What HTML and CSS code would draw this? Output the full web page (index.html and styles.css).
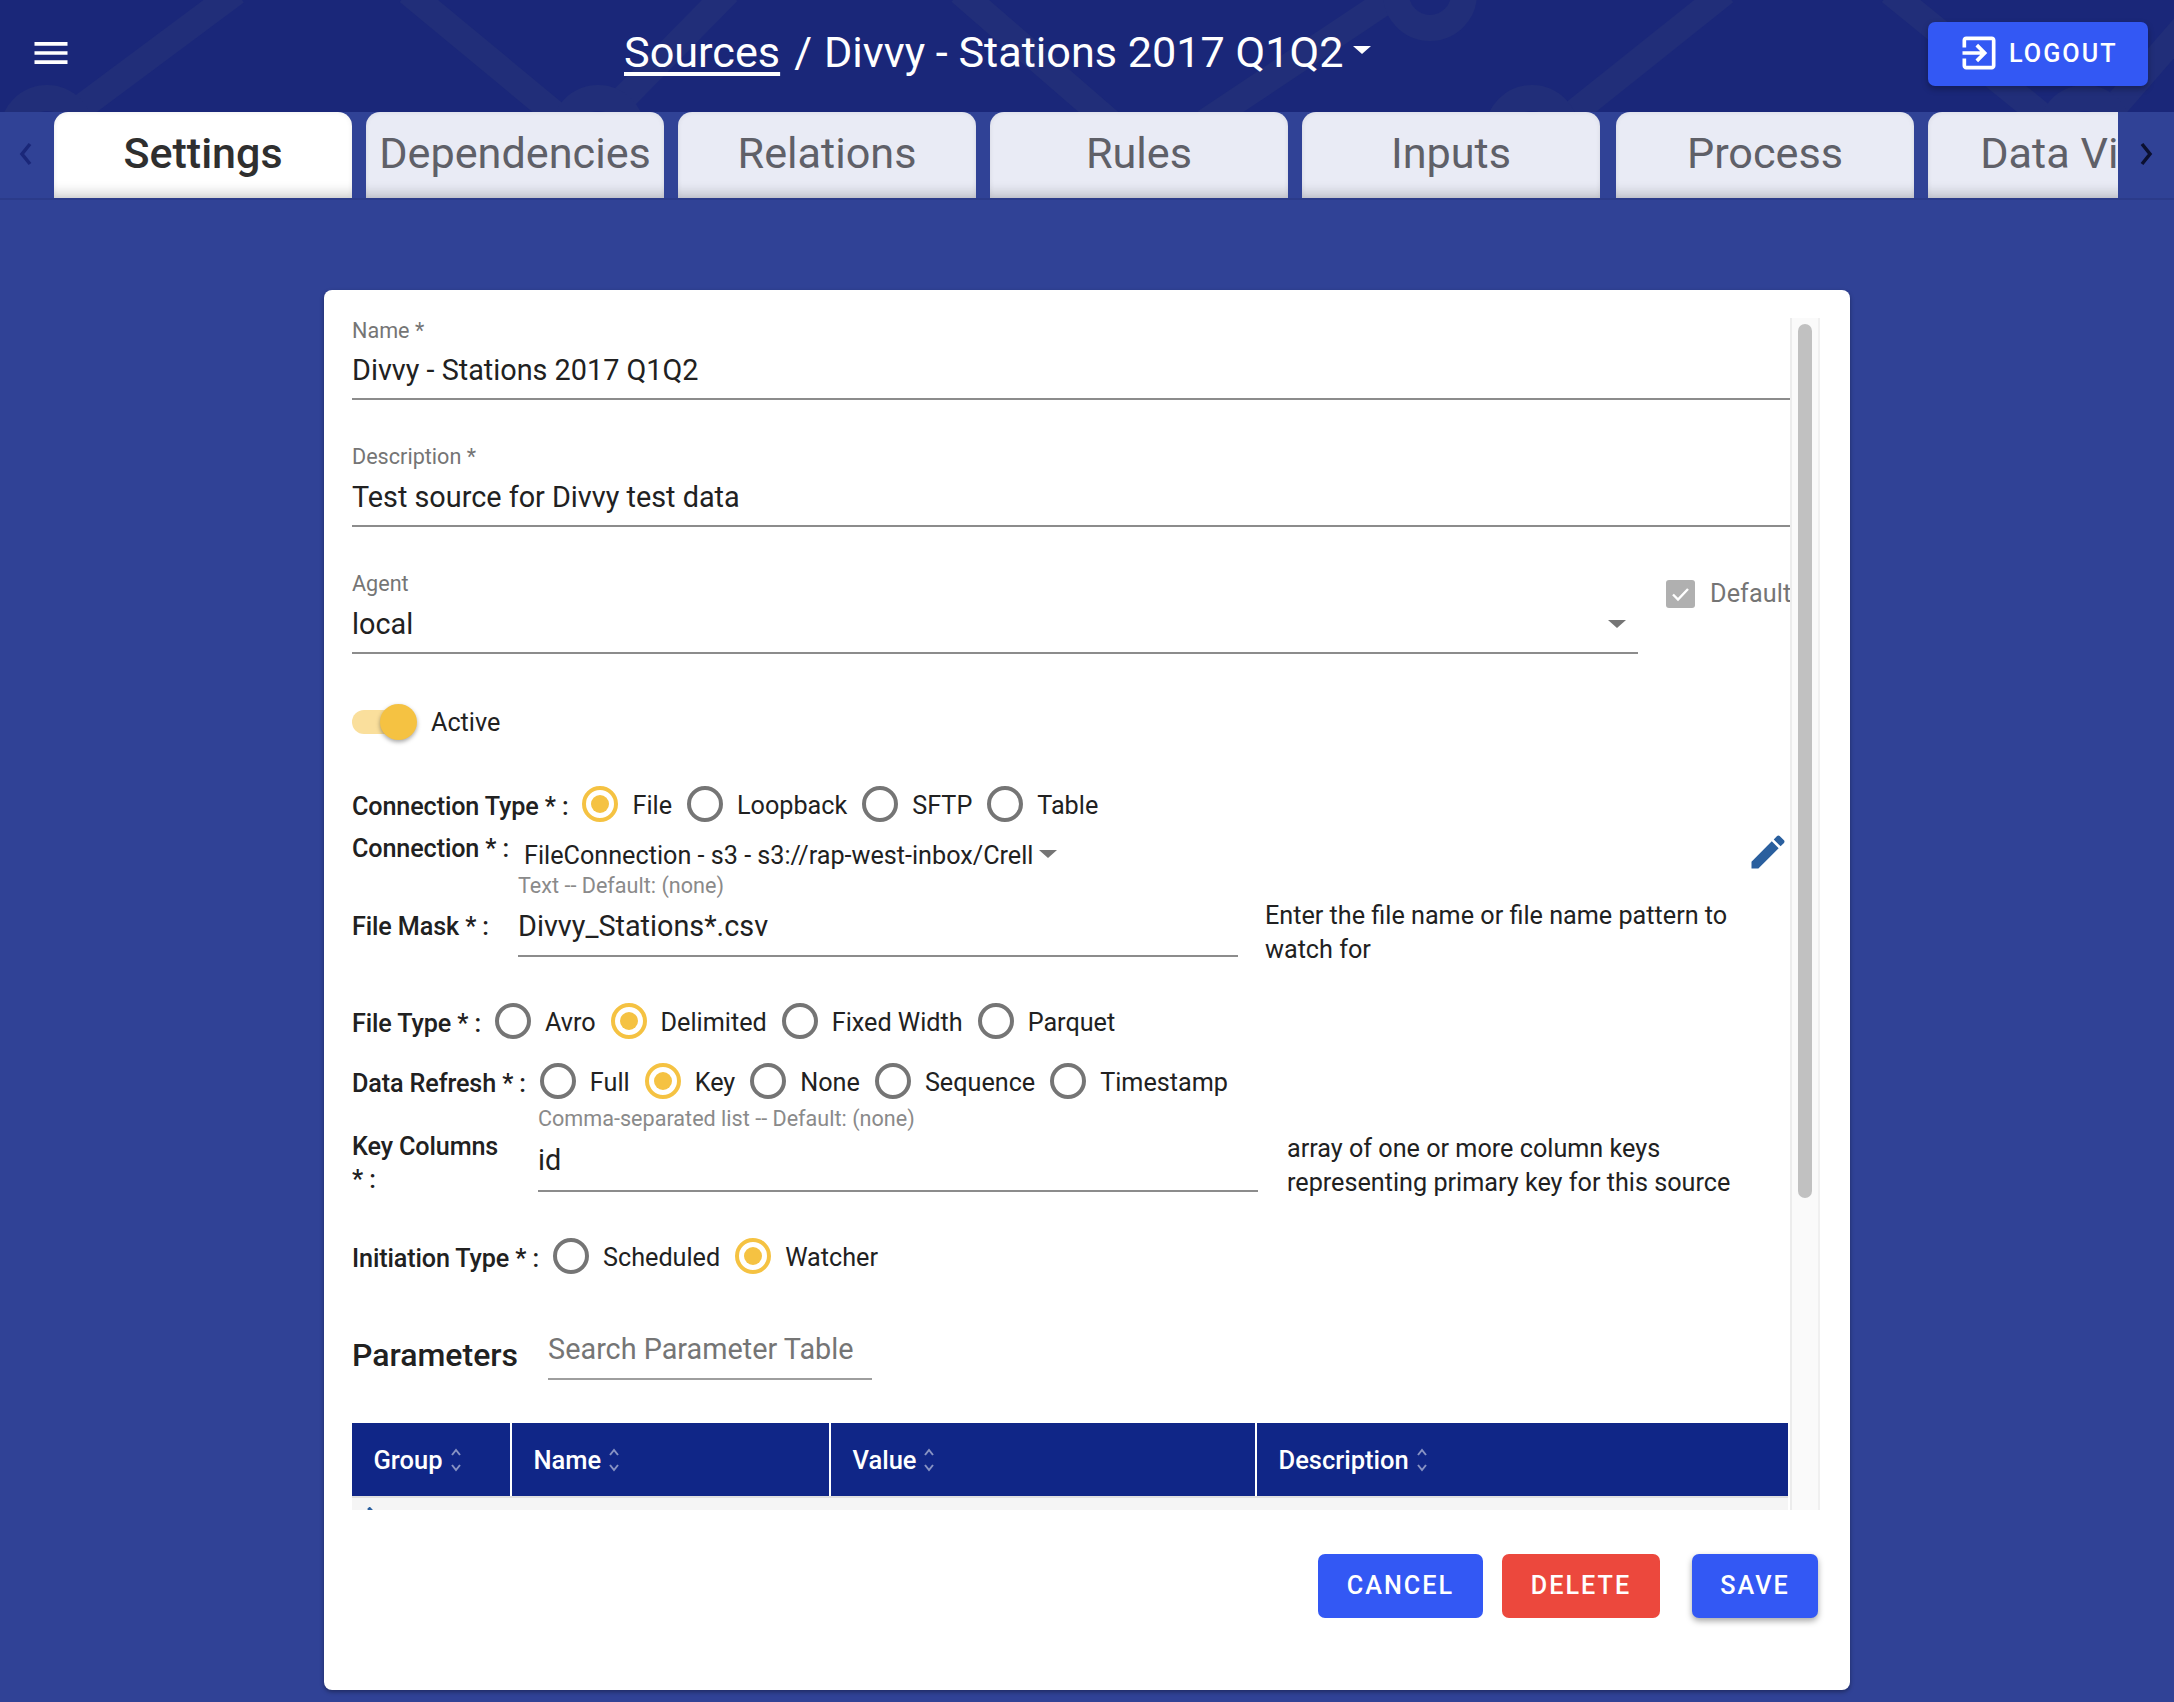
FILE: index.html
```html
<!DOCTYPE html>
<html>
<head lang="en">
    <meta charset="UTF-8">
    <title>Sources</title>
    <link rel="stylesheet" href="styles.css">
</head>
<body>
<div class="topbar">
    <svg class="topbar-bg" width="2174" height="112" viewBox="0 0 2174 112" fill="none">
        <g stroke="#212e79" stroke-width="26">
            <path d="M75 112L236 -8"/>
            <path d="M408 -8L565 122"/>
            <path d="M610 112L728 -8"/>
            <path d="M960 -8L1110 122"/>
            <path d="M1205 122L1400 -8"/>
            <path d="M1575 112L1725 -8"/>
            <path d="M1890 -8L2050 122"/>
            <path d="M2110 112L2190 20"/>
            <circle cx="47" cy="132" r="34"/>
            <circle cx="598" cy="132" r="34"/>
            <circle cx="1430" cy="-6" r="34"/>
            <circle cx="1532" cy="132" r="34"/>
            <circle cx="2085" cy="132" r="34"/>
        </g>
    </svg>
    <svg class="menu-icon" width="44" height="44" viewBox="0 0 24 24" fill="#fff"><path d="M3 18h18v-2H3v2zm0-5h18v-2H3v2zm0-7v2h18V6H3z"/></svg>
    <div class="title">
        <a class="title-link">Sources</a>
        <span class="title-sep">/</span>
        <span>Divvy - Stations 2017 Q1Q2</span>
        <span class="caret caret-white"></span>
    </div>
    <button class="btn btn-logout">
        <svg width="44" height="44" viewBox="0 0 24 24" fill="#fff"><path d="M10.09 15.59L11.5 17l5-5-5-5-1.41 1.41L12.67 11H3v2h9.67l-2.58 2.59zM19 3H5c-1.11 0-2 .9-2 2v4h2V5h14v14H5v-4H3v4c0 1.1.89 2 2 2h14c1.1 0 2-.9 2-2V5c0-1.1-.9-2-2-2z"/></svg>
        <span>LOGOUT</span>
    </button>
</div>

<div class="tabbar">
    <div class="tab-arrow tab-arrow-left">
        <svg width="20" height="30" viewBox="0 0 20 30" fill="none" stroke="#1a2779" stroke-width="3.5"><path d="M14 5L6 15l8 10"/></svg>
    </div>
    <div class="tabs">
        <div class="tab tab-active">Settings</div>
        <div class="tab">Dependencies</div>
        <div class="tab">Relations</div>
        <div class="tab">Rules</div>
        <div class="tab">Inputs</div>
        <div class="tab tab-process">Process</div>
        <div class="tab">Data View</div>
    </div>
    <div class="tab-arrow tab-arrow-right">
        <svg width="20" height="30" viewBox="0 0 20 30" fill="none" stroke="#0b1030" stroke-width="3.5"><path d="M6 5l8 10L6 25"/></svg>
    </div>
</div>

<div class="card">
    <div class="pane">
        <div class="form">
            <div class="field field-name">
                <div class="field-label">Name *</div>
                <div class="field-value">Divvy - Stations 2017 Q1Q2</div>
            </div>
            <div class="field field-desc">
                <div class="field-label">Description *</div>
                <div class="field-value">Test source for Divvy test data</div>
            </div>
            <div class="agent-row">
                <div class="field field-agent">
                    <div class="field-label">Agent</div>
                    <div class="field-value">local<span class="caret caret-select"></span></div>
                </div>
                <div class="default-check">
                    <span class="checkbox">
                        <svg width="29" height="28" viewBox="0 0 29 28" fill="none" stroke="#fff" stroke-width="2.4"><path d="M7 14.5l5 5L22 9"/></svg>
                    </span>
                    <span>Default</span>
                </div>
            </div>

            <div class="switch-row">
                <span class="switch"><span class="switch-thumb"></span></span>
                <span>Active</span>
            </div>

            <div class="radio-row row-conntype">
                <span class="row-label">Connection Type * :</span>
                <span class="option"><span class="radio radio-on"></span>File</span>
                <span class="option"><span class="radio"></span>Loopback</span>
                <span class="option"><span class="radio"></span>SFTP</span>
                <span class="option"><span class="radio"></span>Table</span>
            </div>

            <div class="conn-row">
                <span class="row-label conn-label">Connection * :</span>
                <div class="conn-body">
                    <div class="conn-value">FileConnection - s3 - s3://rap-west-inbox/Crell<span class="caret caret-conn"></span></div>
                    <div class="hint">Text -- Default: (none)</div>
                </div>
                <svg class="edit-icon" width="44" height="44" viewBox="0 0 24 24" fill="#2a5f9e"><path d="M3 17.25V21h3.75L17.81 9.94l-3.75-3.75L3 17.25zM20.71 7.04c.39-.39.39-1.02 0-1.41l-2.34-2.34c-.39-.39-1.02-.39-1.41 0l-1.83 1.83 3.75 3.75 1.83-1.83z"/></svg>
            </div>

            <div class="mask-row">
                <span class="row-label mask-label">File Mask * :</span>
                <div class="input-line">Divvy_Stations*.csv</div>
                <div class="help help-mask">Enter the file name or file name pattern to watch for</div>
            </div>

            <div class="radio-row row-filetype">
                <span class="row-label">File Type * :</span>
                <span class="option"><span class="radio"></span>Avro</span>
                <span class="option"><span class="radio radio-on"></span>Delimited</span>
                <span class="option"><span class="radio"></span>Fixed Width</span>
                <span class="option"><span class="radio"></span>Parquet</span>
            </div>

            <div class="radio-row row-refresh">
                <span class="row-label">Data Refresh * :</span>
                <span class="option"><span class="radio"></span>Full</span>
                <span class="option"><span class="radio radio-on"></span>Key</span>
                <span class="option"><span class="radio"></span>None</span>
                <span class="option"><span class="radio"></span>Sequence</span>
                <span class="option"><span class="radio"></span>Timestamp</span>
            </div>

            <div class="key-row">
                <span class="row-label key-label">Key Columns * :</span>
                <div class="key-body">
                    <div class="hint">Comma-separated list -- Default: (none)</div>
                    <div class="input-line">id</div>
                </div>
                <div class="help help-key">array of one or more column keys representing primary key for this source</div>
            </div>

            <div class="radio-row row-init">
                <span class="row-label">Initiation Type * :</span>
                <span class="option"><span class="radio"></span>Scheduled</span>
                <span class="option"><span class="radio radio-on"></span>Watcher</span>
            </div>

            <div class="param-row">
                <span class="param-title">Parameters</span>
                <div class="param-search">Search Parameter Table</div>
            </div>

            <table class="param-table">
                <thead>
                    <tr>
                        <th class="col-group">Group<svg class="sort" width="12" height="24" viewBox="0 0 12 24" fill="none"><path d="M2 7l4-5 4 5M2 17l4 5 4-5"/></svg></th>
                        <th class="col-name">Name<svg class="sort" width="12" height="24" viewBox="0 0 12 24" fill="none"><path d="M2 7l4-5 4 5M2 17l4 5 4-5"/></svg></th>
                        <th class="col-value">Value<svg class="sort" width="12" height="24" viewBox="0 0 12 24" fill="none"><path d="M2 7l4-5 4 5M2 17l4 5 4-5"/></svg></th>
                        <th>Description<svg class="sort" width="12" height="24" viewBox="0 0 12 24" fill="none"><path d="M2 7l4-5 4 5M2 17l4 5 4-5"/></svg></th>
                    </tr>
                </thead>
                <tbody>
                    <tr>
                        <td colspan="4"><svg width="24" height="24" viewBox="0 0 24 24" fill="#2a5f9e"><path d="M3 17.25V21h3.75L17.81 9.94l-3.75-3.75L3 17.25zM20.71 7.04c.39-.39.39-1.02 0-1.41l-2.34-2.34c-.39-.39-1.02-.39-1.41 0l-1.83 1.83 3.75 3.75 1.83-1.83z"/></svg></td>
                    </tr>
                </tbody>
            </table>
        </div>
        <div class="scrollbar"><div class="scroll-thumb"></div></div>
    </div>

    <div class="actions">
        <button class="btn btn-cancel">CANCEL</button>
        <button class="btn btn-delete">DELETE</button>
        <button class="btn btn-save">SAVE</button>
    </div>
</div>
</body>
</html>
```

FILE: styles.css
```css
* {
    margin: 0;
    padding: 0;
    box-sizing: border-box;
}
html, body {
    height: 100%;
    overflow: hidden;
}
body {
    background: #304296;
    font-family: Roboto, "Liberation Sans", sans-serif;
    font-size: 25.2px;
    color: #212121;
}

/* top bar */
.topbar {
    position: relative;
    height: 112px;
    background: #1a2779;
    display: flex;
    align-items: center;
    color: #fff;
    overflow: hidden;
}
.topbar-bg {
    position: absolute;
    left: 0;
    top: 0;
}
.menu-icon {
    position: relative;
    margin: 0 0 6px 29px;
}
.title {
    position: relative;
    margin: 0 0 6px 551px;
    display: flex;
    align-items: center;
    font-size: 43.2px;
    line-height: 52px;
}
.title-link {
    text-decoration: underline;
    text-decoration-thickness: 4px;
    text-underline-offset: 5px;
}
.title-sep {
    margin: 0 12px 0 14px;
}
.caret {
    display: inline-block;
    width: 0;
    height: 0;
    border-left: 9px solid transparent;
    border-right: 9px solid transparent;
    border-top: 8px solid #757575;
}
.caret-white {
    border-top-color: #fff;
    margin: 0 0 7px 9px;
}
.btn {
    border: 0;
    border-radius: 7px;
    height: 64px;
    padding-bottom: 2px;
    color: #fff;
    font-family: Roboto, "Liberation Sans", sans-serif;
    font-size: 25.2px;
    font-weight: 500;
    letter-spacing: 2px;
    background: #3358f4;
}
.btn-logout {
    position: absolute;
    left: 1928px;
    top: 22px;
    width: 220px;
    display: flex;
    align-items: center;
    padding-left: 29px;
    gap: 8px;
    box-shadow: 0 3px 6px rgba(0, 0, 0, 0.3);
}

/* tabs */
.tabbar {
    height: 88px;
    display: flex;
    border-bottom: 2px solid #2b3b8a;
    background: #304296;
}
.tab-arrow {
    display: flex;
    align-items: center;
    justify-content: center;
    flex: none;
    padding-bottom: 2px;
}
.tab-arrow-left {
    width: 54px;
    padding-right: 2px;
}
.tab-arrow-right {
    width: 56px;
}
.tabs {
    width: 2064px;
    display: flex;
    gap: 14px;
    overflow: hidden;
}
.tab {
    flex: none;
    width: 298px;
    height: 86px;
    background: #e9ebf5;
    color: #5f6068;
    border-radius: 14px 14px 0 0;
    font-size: 43.2px;
    line-height: 84px;
    text-align: center;
    white-space: nowrap;
    box-shadow: inset 0 -16px 12px -10px rgba(0, 0, 0, 0.16), inset 0 0 5px rgba(0, 0, 0, 0.08);
}
.tab-active {
    background: #fff;
    color: #2f2f2f;
    font-weight: 500;
    font-size: 43px;
    line-height: 83px;
}
.tab-process {
    margin-left: 2px;
}

/* card */
.card {
    margin: 90px 0 0 324px;
    width: 1526px;
    height: 1400px;
    background: #fff;
    border-radius: 8px;
    box-shadow: 0 2px 4px rgba(0, 0, 0, 0.35);
    padding: 28px 0 0 28px;
}
.pane {
    display: flex;
    height: 1192px;
    overflow: hidden;
}
.form {
    width: 1438px;
    flex: none;
    overflow: hidden;
}
.scrollbar {
    width: 30px;
    flex: none;
    background: #fafafa;
    border-left: 2px solid #ececec;
    border-right: 2px solid #f0f0f0;
    padding: 6px 6px 0;
}
.scroll-thumb {
    height: 874px;
    background: #c1c1c1;
    border-radius: 8px;
}

/* text fields */
.field-label {
    height: 25px;
    font-size: 21.6px;
    line-height: 25px;
    color: #757575;
}
.field-desc .field-label,
.field-agent .field-label {
    line-height: 23px;
}
.field-value {
    height: 57px;
    border-bottom: 2px solid #8c8c8c;
    font-size: 28.8px;
    line-height: 54px;
    position: relative;
}
.field-desc {
    margin-top: 45px;
}
.agent-row {
    margin-top: 45px;
    display: flex;
    height: 82px;
}
.field-agent {
    width: 1286px;
    flex: none;
}
.caret-select {
    position: absolute;
    right: 12px;
    top: 23px;
}
.default-check {
    margin-left: 28px;
    padding-top: 8px;
    display: flex;
    gap: 15px;
    color: #757575;
    white-space: nowrap;
    line-height: 28px;
    letter-spacing: 0.1px;
    overflow: hidden;
    height: 40px;
    flex: none;
    width: 124px;
}
.checkbox {
    flex: none;
    width: 29px;
    height: 28px;
    background: #b0b0b0;
    border-radius: 3px;
}
.checkbox svg {
    display: block;
}
.switch-row {
    margin-top: 50px;
    height: 36px;
    display: flex;
    align-items: center;
    gap: 14px;
}
.switch {
    position: relative;
    width: 65px;
    height: 24px;
}
.switch::before {
    content: "";
    display: block;
    width: 48px;
    height: 24px;
    border-radius: 12px;
    background: #fadf9c;
}
.switch-thumb {
    position: absolute;
    left: 28px;
    top: -6px;
    width: 37px;
    height: 36px;
    border-radius: 50%;
    background: #f5c242;
    box-shadow: 0 2px 4px rgba(0, 0, 0, 0.35);
}

/* radio rows */
.radio-row {
    display: flex;
    align-items: flex-start;
    height: 36px;
    white-space: nowrap;
}
.row-conntype { margin-top: 46px; }
.row-filetype { margin-top: 39px; }
.row-refresh { margin-top: 24px; }
.row-init { margin-top: 46px; }
.row-label {
    font-weight: 500;
    letter-spacing: -0.13px;
}
.radio-row .row-label {
    margin-right: 14px;
    padding-top: 6px;
}
.option {
    display: flex;
    align-items: flex-start;
    gap: 14px;
    margin-right: 15px;
    padding-top: 2px;
    line-height: 36px;
}
.radio {
    width: 36px;
    height: 36px;
    margin-top: -2px;
    border: 4px solid #757575;
    border-radius: 50%;
    display: flex;
    align-items: center;
    justify-content: center;
}
.radio-on {
    border-color: #f5c242;
}
.radio-on::after {
    content: "";
    width: 18px;
    height: 18px;
    border-radius: 50%;
    background: #f5c242;
}

/* connection row */
.conn-row {
    margin-top: 12px;
    display: flex;
    height: 63px;
}
.conn-label {
    width: 166px;
    flex: none;
    line-height: 30px;
}
.conn-value {
    margin: 7px 0 0 6px;
    line-height: 30px;
    white-space: nowrap;
}
.caret-conn {
    margin: 0 0 7px 6px;
    vertical-align: middle;
}
.hint {
    height: 24px;
    line-height: 24px;
    font-size: 21.6px;
    color: #8a8a8a;
    white-space: nowrap;
}
.conn-body .hint {
    margin-top: 3px;
}
.edit-icon {
    margin: -4px 0 0 auto;
}

/* inputs with a line */
.input-line {
    width: 720px;
    height: 60px;
    flex: none;
    border-bottom: 2px solid #8c8c8c;
    font-size: 28.8px;
    line-height: 58px;
}
.help {
    line-height: 34px;
}
.mask-row {
    display: flex;
    height: 67px;
}
.mask-label {
    width: 166px;
    flex: none;
    line-height: 60px;
}
.help-mask {
    margin: 2px 0 0 27px;
    width: 500px;
}
.key-row {
    margin-top: 8px;
    display: flex;
    height: 85px;
}
.key-label {
    width: 186px;
    flex: none;
    line-height: 33px;
    padding-top: 23px;
    padding-right: 30px;
}
.help-key {
    margin: 25px 0 0 29px;
    width: 460px;
}
.key-body .input-line {
    height: 61px;
}

/* parameters */
.param-row {
    margin-top: 47px;
    display: flex;
    gap: 30px;
    height: 59px;
}
.param-title {
    font-size: 32px;
    font-weight: 500;
    line-height: 38px;
    padding-top: 15px;
}
.param-search {
    width: 324px;
    border-bottom: 2px solid #9e9e9e;
    color: #757575;
    font-size: 28.8px;
    line-height: 56px;
}
.param-table {
    margin-top: 43px;
    width: 1436px;
    border-collapse: collapse;
    table-layout: fixed;
}
.param-table th {
    height: 74px;
    background: #102687;
    color: #fff;
    font-size: 25.5px;
    font-weight: 500;
    text-align: left;
    padding-left: 21.5px;
    border-left: 2px solid #fff;
    border-bottom: 2px solid #e0e0e0;
}
.param-table th:first-child {
    border-left: 0;
}
.col-group { width: 159px; }
.col-name { width: 319px; }
.col-value { width: 426px; }
.sort {
    margin-left: 7px;
    vertical-align: -3px;
    stroke: rgba(255, 255, 255, 0.5);
    stroke-width: 2;
}
.param-table td {
    background: #f5f5f5;
    padding: 6px 0 0 0;
    height: 60px;
    vertical-align: top;
}

/* footer buttons */
.actions {
    margin-top: 44px;
    padding-right: 32px;
    display: flex;
    justify-content: flex-end;
}
.btn-cancel { width: 165px; }
.btn-delete {
    width: 158px;
    margin-left: 19px;
    background: #ec483d;
}
.btn-save {
    width: 126px;
    margin-left: 32px;
    box-shadow: 0 3px 6px rgba(0, 0, 0, 0.35);
}
```
